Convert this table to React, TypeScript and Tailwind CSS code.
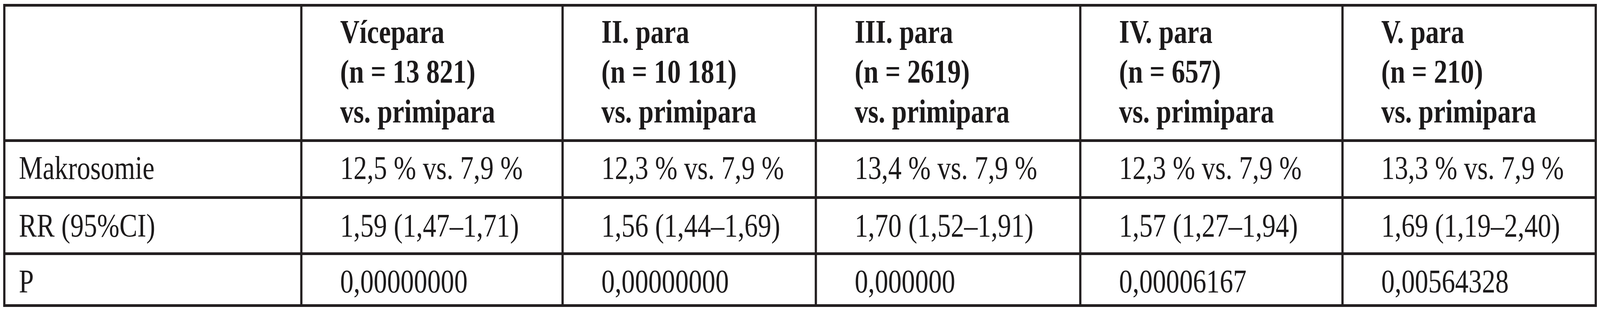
import { Fragment } from 'react'

// The browser window is capped at 4096px wide, while the sheet is drawn at 5010px.
// The sheet keeps its own 5010px geometry and is squeezed horizontally to fit.

const headers = [
  { title: 'Vícepara', n: '(n = 13 821)' },
  { title: 'II. para', n: '(n = 10 181)' },
  { title: 'III. para', n: '(n = 2619)' },
  { title: 'IV. para', n: '(n = 657)' },
  { title: 'V. para', n: '(n = 210)' },
]

const rows = [
  {
    label: 'Makrosomie',
    pad: 'pt-[16px]',
    values: ['12,5 % vs. 7,9 %', '12,3 % vs. 7,9 %', '13,4 % vs. 7,9 %', '12,3 % vs. 7,9 %', '13,3 % vs. 7,9 %'],
  },
  {
    label: 'RR (95%CI)',
    pad: 'pt-[18px]',
    values: ['1,59 (1,47–1,71)', '1,56 (1,44–1,69)', '1,70 (1,52–1,91)', '1,57 (1,27–1,94)', '1,69 (1,19–2,40)'],
  },
  {
    label: 'P',
    pad: 'pt-[17px]',
    values: ['0,00000000', '0,00000000', '0,000000', '0,00006167', '0,00564328'],
  },
]

export default function App() {
  return (
    <div className="h-[800px] w-full overflow-hidden bg-white">
      <div className="h-[800px] w-[5010px] origin-top-left scale-x-[0.8176] pl-[10px] pt-[10px] font-['Liberation_Serif','Times_New_Roman',serif] text-[84px] leading-[102px] text-[#1c1a1b]">
        <div className="grid w-fit grid-cols-[923px_811px_786px_821px_814px_786px] grid-rows-[340px_139px_137px_126px] gap-[7px] bg-[#231f20] p-[7px]">
          <div className="bg-white" />
          {headers.map((h) => (
            <div key={h.title} className="whitespace-nowrap bg-white pl-[118px] pt-[14px] font-bold">
              <div>{h.title}</div>
              <div>{h.n}</div>
              <div>vs. primipara</div>
            </div>
          ))}

          {rows.map((row) => (
            <Fragment key={row.label}>
              <div className={`whitespace-nowrap bg-white pl-[42px] ${row.pad}`}>{row.label}</div>
              {row.values.map((v, i) => (
                <div key={i} className={`whitespace-nowrap bg-white pl-[118px] ${row.pad}`}>
                  {v}
                </div>
              ))}
            </Fragment>
          ))}
        </div>
      </div>
    </div>
  )
}
